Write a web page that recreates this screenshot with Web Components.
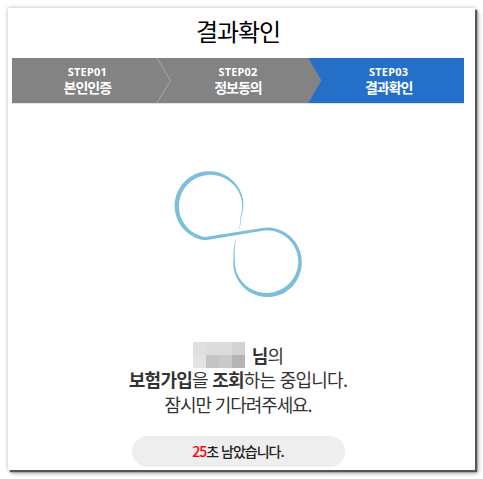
<!DOCTYPE html>
<html lang="ko">
<head>
<meta charset="utf-8">
<title>결과확인</title>
<style>
  html, body { margin: 0; background: #fff; }
  body { padding: 8px; font-family: "Noto Sans CJK KR", "Noto Sans", sans-serif; }
</style>
</head>
<body>

<result-window>
  <step-bar>
    <step-item label="STEP01" name="본인인증"></step-item>
    <step-item label="STEP02" name="정보동의"></step-item>
    <step-item label="STEP03" name="결과확인" active></step-item>
  </step-bar>
  <loop-spinner></loop-spinner>
  <wait-message></wait-message>
  <count-pill seconds="25"></count-pill>
</result-window>

<script>
class ResultWindow extends HTMLElement {
    constructor() {
        super();
        this.attachShadow({ mode: 'open' });
        this.shadowRoot.innerHTML = `
            <style>
                :host {
                    display: block;
                    box-sizing: border-box;
                    width: 467px;
                    height: 462px;
                    padding: 0 11px 0 4px;
                    background: #fff;
                    box-shadow: 2px 2px 1px #555, 3px 3px 4px #999, 0 0 4px #bbb;
                }
                h1 {
                    margin: 0;
                    height: 50px;
                    line-height: 45px;
                    text-align: center;
                    font-size: 24px;
                    font-weight: 400;
                    letter-spacing: -1.05px;
                    color: #000;
                }
            </style>
            <h1>결과확인</h1>
            <slot></slot>
        `;
    }
}

class StepBar extends HTMLElement {
    constructor() {
        super();
        this.attachShadow({ mode: 'open' });
        this.shadowRoot.innerHTML = `
            <style>
                :host {
                    display: grid;
                    grid-template-columns: repeat(3, 1fr);
                    height: 45px;
                    background: #838383;
                    border-bottom: 1px solid #dfe3e8;
                }
            </style>
            <slot></slot>
        `;
    }
}

class StepItem extends HTMLElement {
    constructor() {
        super();
        this.attachShadow({ mode: 'open' });
        const label = this.getAttribute('label');
        const name = this.getAttribute('name');
        const hasArrow = label === 'STEP01';
        this.shadowRoot.innerHTML = `
            <style>
                :host {
                    display: flex;
                    flex-direction: column;
                    align-items: center;
                    position: relative;
                    color: #fff;
                    padding-top: 7px;
                }
                :host([active])::before {
                    content: "";
                    position: absolute;
                    top: 0; bottom: 0; right: 0; left: -5px;
                    background: #2470c8;
                    clip-path: polygon(0 0, 100% 0, 100% 100%, 0 100%, 13px 50%);
                }
                .label, .name { position: relative; }
                .label {
                    font: 700 11px/14px "Noto Sans", sans-serif;
                    letter-spacing: 0.2px;
                }
                .name {
                    font-size: 14px;
                    line-height: 17px;
                    font-weight: 700;
                    letter-spacing: -1px;
                }
                svg { position: absolute; top: 0; right: -9px; }
            </style>
            <span class="label">${label}</span>
            <span class="name">${name}</span>
            ${hasArrow ? `<svg width="16" height="45" viewBox="0 0 16 45"><path d="M1 0 L14.5 22.5 L1 45" fill="none" stroke="#a8a8a8" stroke-width="1"/></svg>` : ''}
        `;
    }
}

class LoopSpinner extends HTMLElement {
    constructor() {
        super();
        this.attachShadow({ mode: 'open' });
        this.shadowRoot.innerHTML = `
            <style>
                :host { display: block; height: 230px; }
                svg { display: block; }
            </style>
            <svg width="452" height="230" viewBox="12 104 452 230">
                <path fill="#7bbfdb" d="${this.buildPath()}"/>
            </svg>
        `;
    }

    // centre line of the loop: short line, arc, line, arc, short line
    centerLine() {
        const pts = [];
        const add = (x, y) => pts.push([x, y]);
        const arc = (cx, cy, r, from, to) => {
            const n = 70;
            for (let i = 0; i <= n; i++) {
                const a = (from + (to - from) * i / n) * Math.PI / 180;
                add(cx + r * Math.cos(a), cy + r * Math.sin(a));
            }
        };
        add(239.6, 229);
        add(241, 217);
        arc(209.8, 206, 33, 5, -262);
        arc(267, 262, 33, -98, 175);
        add(234, 252);
        add(235.6, 239);
        return pts;
    }

    widthAt(t) {
        const stops = [[0, 0.4], [0.06, 1.2], [0.12, 2.4], [0.2, 4], [0.3, 4.4], [0.4, 3.4], [0.5, 2.7],
            [0.6, 3], [0.7, 3.6], [0.78, 4.6], [0.86, 3.4], [0.92, 2], [0.97, 1], [1, 0.4]];
        for (let i = 1; i < stops.length; i++) {
            if (t <= stops[i][0]) {
                const [t0, w0] = stops[i - 1];
                const [t1, w1] = stops[i];
                return w0 + (w1 - w0) * (t - t0) / (t1 - t0);
            }
        }
        return 0.4;
    }

    buildPath() {
        const pts = this.centerLine();
        const lens = [0];
        for (let i = 1; i < pts.length; i++) {
            lens[i] = lens[i - 1] + Math.hypot(pts[i][0] - pts[i - 1][0], pts[i][1] - pts[i - 1][1]);
        }
        const total = lens[lens.length - 1];
        const left = [], right = [];
        pts.forEach((p, i) => {
            const a = pts[Math.max(i - 1, 0)], b = pts[Math.min(i + 1, pts.length - 1)];
            const d = Math.hypot(b[0] - a[0], b[1] - a[1]) || 1;
            const nx = -(b[1] - a[1]) / d, ny = (b[0] - a[0]) / d;
            const w = this.widthAt(lens[i] / total) / 2;
            left.push((p[0] + nx * w).toFixed(2) + ' ' + (p[1] + ny * w).toFixed(2));
            right.unshift((p[0] - nx * w).toFixed(2) + ' ' + (p[1] - ny * w).toFixed(2));
        });
        return 'M' + left.concat(right).join('L') + 'Z';
    }
}

class WaitMessage extends HTMLElement {
    constructor() {
        super();
        this.attachShadow({ mode: 'open' });
        this.shadowRoot.innerHTML = `
            <style>
                :host {
                    display: block;
                    text-align: center;
                    font-size: 18px;
                    line-height: 25px;
                    letter-spacing: -0.75px;
                    color: #333;
                }
                b { font-weight: 700; }
                .name-row { display: flex; justify-content: center; align-items: flex-end; height: 33px; }
                .name-row span { margin-left: 7px; line-height: 24px; }
                .mosaic {
                    display: grid;
                    grid-template-columns: repeat(4, 13px);
                    grid-template-rows: repeat(2, 13px);
                    margin-bottom: -1px;
                }
                .mosaic i { display: block; }
                .tight { letter-spacing: -1.1px; }
            </style>
            <div class="name-row">
                <div class="mosaic">
                    <i style="background:#e0e0e0"></i><i style="background:#dcdcdc"></i><i style="background:#dbdbdb"></i><i style="background:#d2d2d2"></i>
                    <i style="background:#e3e3e3"></i><i style="background:#c4c4c4"></i><i style="background:#c9c9c9"></i><i style="background:#b4b4b4"></i>
                </div>
                <span><b>님</b>의</span>
            </div>
            <div><b>보험가입</b>을 <b>조회</b>하는 중입니다.</div>
            <div class="tight">잠시만 기다려주세요.</div>
        `;
    }
}

class CountPill extends HTMLElement {
    constructor() {
        super();
        this.attachShadow({ mode: 'open' });
        this.shadowRoot.innerHTML = `
            <style>
                :host {
                    display: block;
                    box-sizing: border-box;
                    width: 213px;
                    height: 31px;
                    margin: 19px auto 0;
                    border-radius: 16px;
                    background: #eee;
                    text-align: center;
                    font-size: 14px;
                    font-weight: 500;
                    line-height: 31px;
                    letter-spacing: -1px;
                    color: #222;
                }
                em { font-style: normal; color: #f00; }
            </style>
            <em>${this.getAttribute('seconds')}</em>초 남았습니다.
        `;
    }
}

customElements.define('result-window', ResultWindow);
customElements.define('step-bar', StepBar);
customElements.define('step-item', StepItem);
customElements.define('loop-spinner', LoopSpinner);
customElements.define('wait-message', WaitMessage);
customElements.define('count-pill', CountPill);
</script>
</body>
</html>
